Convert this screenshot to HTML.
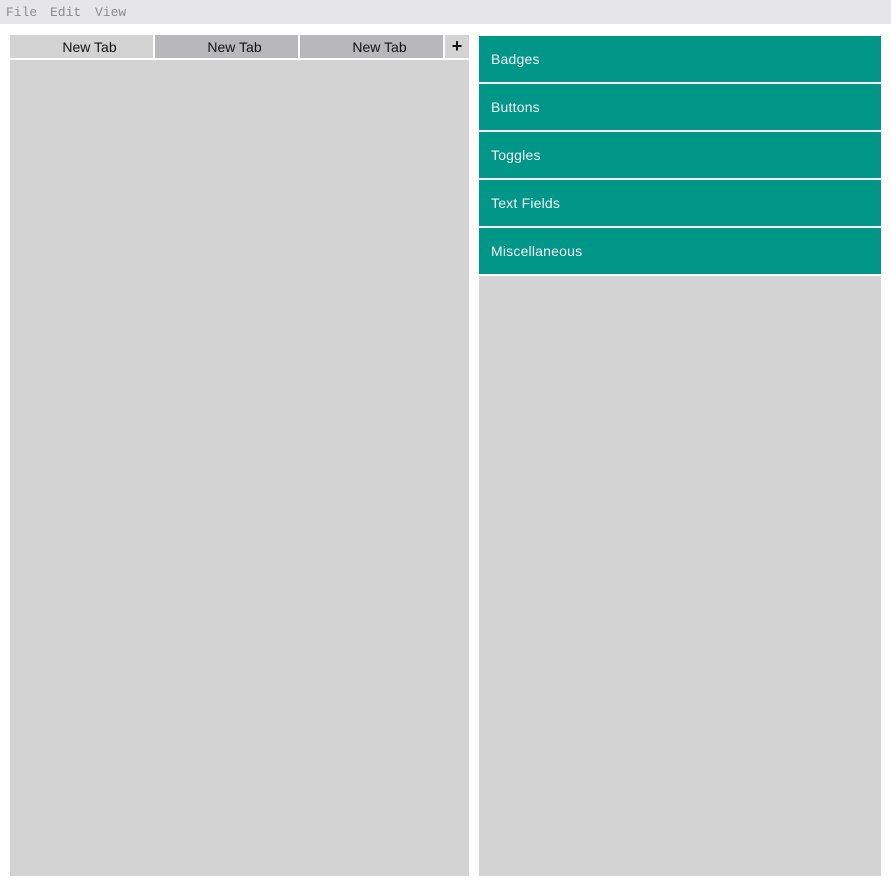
<!DOCTYPE html>
<html><head><style>
body{margin:0;width:891px;height:886px;background:#fff;position:relative;font-family:"Liberation Sans",sans-serif;overflow:hidden}
.menu{position:absolute;left:0;top:0;width:891px;height:24px;background:#e6e6ea;font-family:"Liberation Mono",monospace;font-size:13px;color:#8a8a90}
.menu span{position:absolute;top:5px}
.tab{position:absolute;top:35px;height:23px;font-size:14px;color:#111;text-align:center;line-height:24px}
.item{position:absolute;left:479px;width:402px;height:46px;background:#009688;color:#f2f2f2;font-size:14px;letter-spacing:0.2px;line-height:47px;padding-left:12px;box-sizing:border-box}
</style></head><body>
<div class="menu"><span style="left:6px">File</span><span style="left:50px">Edit</span><span style="left:95px">View</span></div>
<div class="tab" style="left:10px;width:143px;background:#d3d3d3;padding-left:16px;box-sizing:border-box">New Tab</div>
<div class="tab" style="left:155px;width:143px;background:#b8b7ba;padding-left:16px;box-sizing:border-box">New Tab</div>
<div class="tab" style="left:300px;width:143px;background:#b8b7ba;padding-left:16px;box-sizing:border-box">New Tab</div>
<div class="tab" style="left:445px;width:24px;background:#d3d3d3;font-size:18px;font-weight:bold;line-height:22px">+</div>
<div style="position:absolute;left:10px;top:60px;width:459px;height:816px;background:#d3d3d3"></div>
<div class="item" style="top:36px">Badges</div>
<div class="item" style="top:84px">Buttons</div>
<div class="item" style="top:132px">Toggles</div>
<div class="item" style="top:180px">Text Fields</div>
<div class="item" style="top:228px">Miscellaneous</div>
<div style="position:absolute;left:479px;top:276px;width:402px;height:600px;background:#d3d3d3"></div>
</body></html>
